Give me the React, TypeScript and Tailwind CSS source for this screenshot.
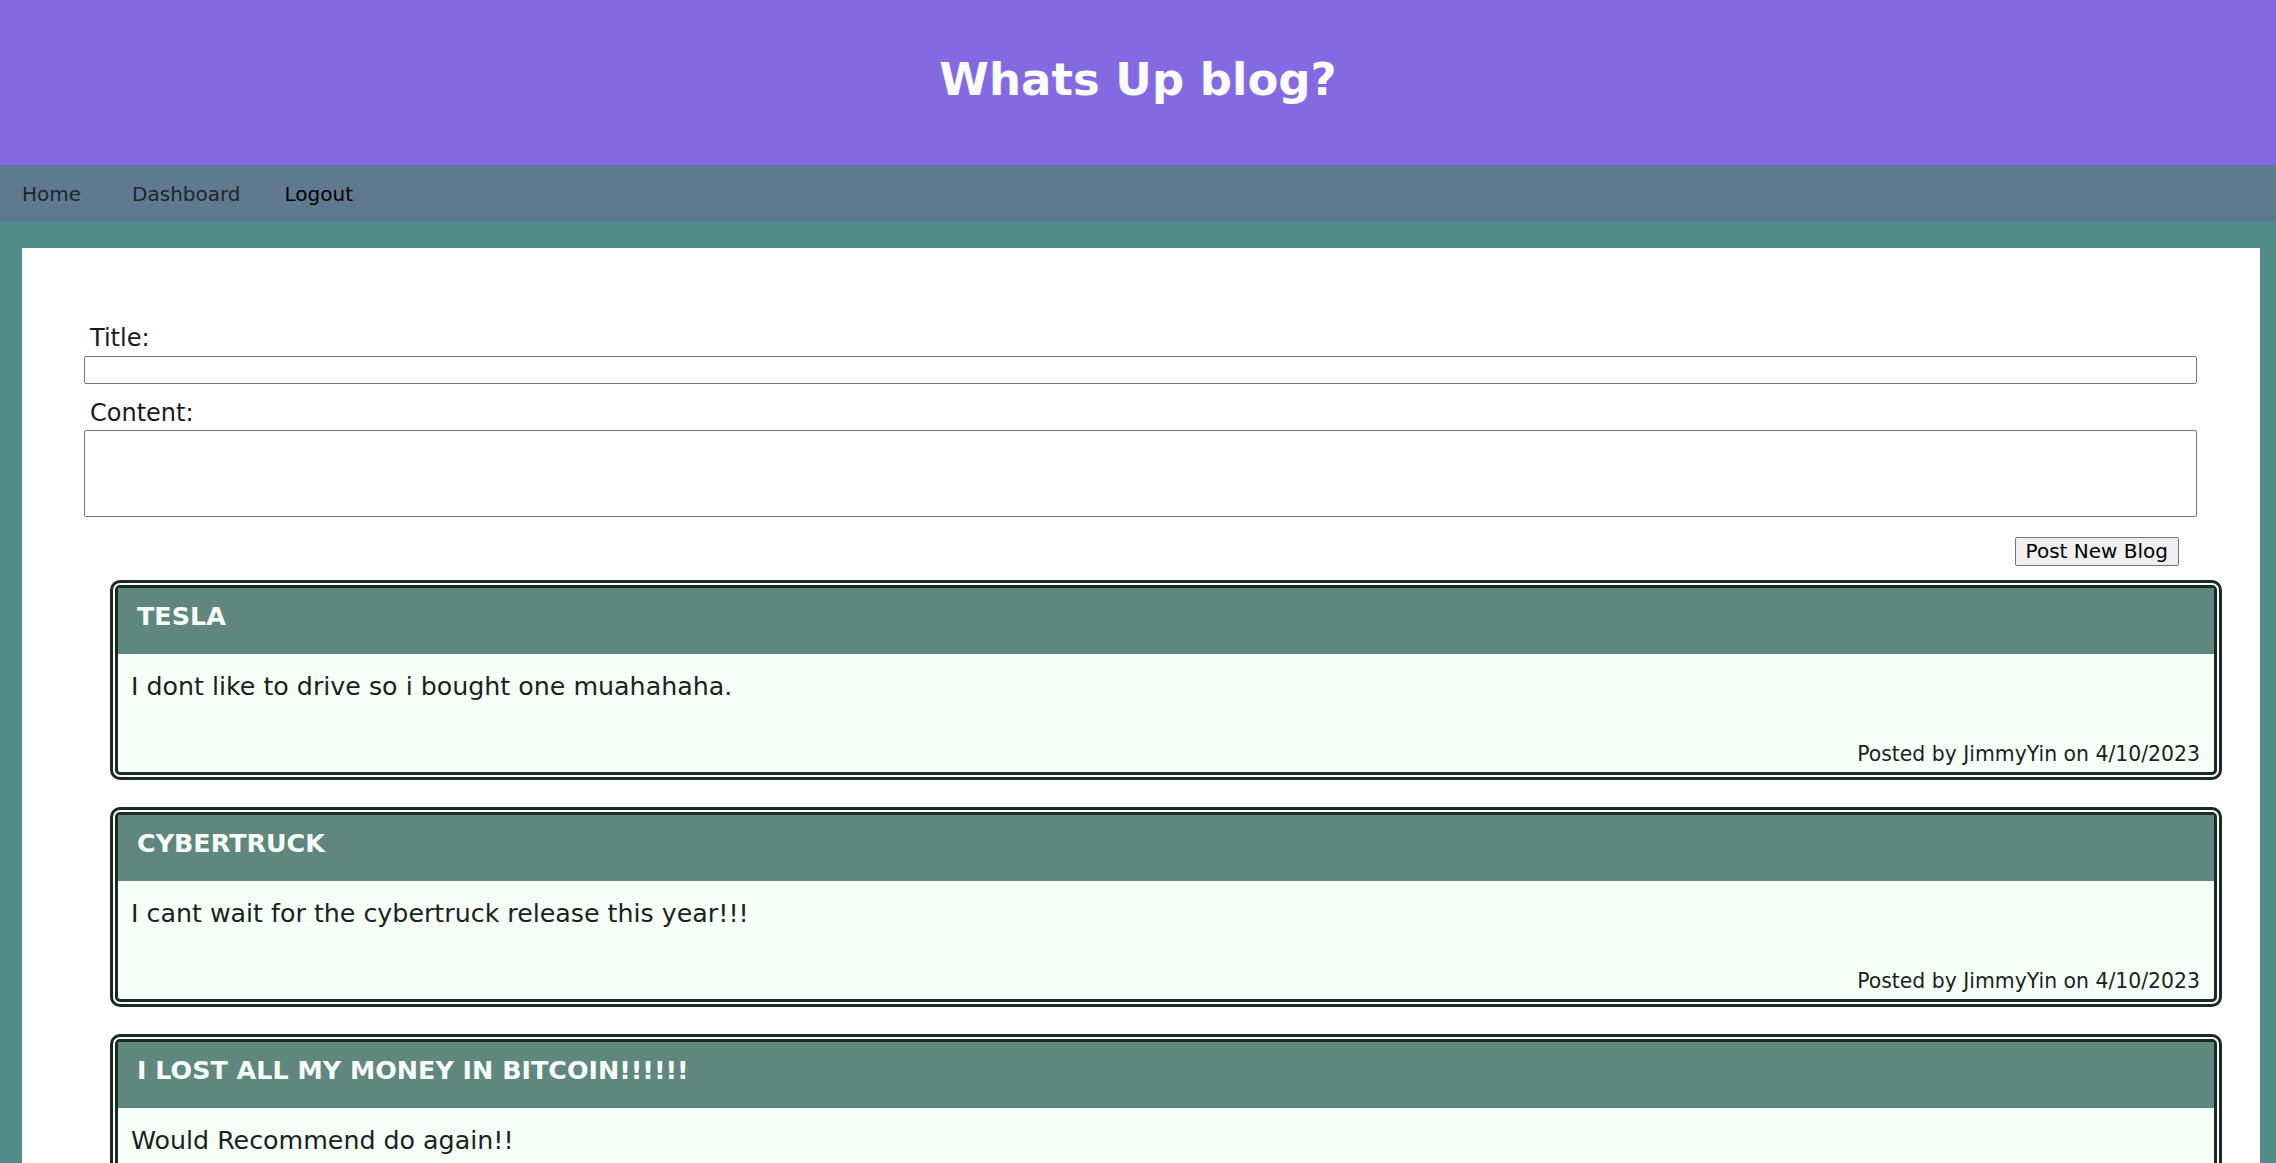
import React from 'react';

type Post = {
  id: number;
  title: string;
  body: string;
  author: string;
  date: string;
};

const posts: Post[] = [
  { id: 1, title: 'TESLA', body: 'I dont like to drive so i bought one muahahaha.', author: 'JimmyYin', date: '4/10/2023' },
  { id: 2, title: 'CYBERTRUCK', body: 'I cant wait for the cybertruck release this year!!!', author: 'JimmyYin', date: '4/10/2023' },
  { id: 3, title: 'I LOST ALL MY MONEY IN BITCOIN!!!!!!', body: 'Would Recommend do again!!', author: 'JimmyYin', date: '4/10/2023' },
];

const font = "font-['DejaVu_Sans','Verdana',sans-serif]";

const PostCard: React.FC<{ post: Post }> = ({ post }) => (
  <div className="mb-[27px] rounded-[10px] border-[8px] border-double border-[#1a2b24] bg-[#f7fff9] overflow-hidden">
    <div className="h-[66px] bg-[#5f877e] pl-[19px] pt-[10px]">
      <h2 className="text-[25.4px] leading-[36px] font-bold text-[#f7fffb]">{post.title}</h2>
    </div>
    <div className="pl-[13px] pr-[14px] pt-[15px] pb-[3px] text-[#1a221e]">
      <p className="text-[25.3px] leading-[36px]">{post.body}</p>
      <p className="mt-[34px] text-right text-[20.4px] leading-[30px]">
        Posted by {post.author} on {post.date}
      </p>
    </div>
  </div>
);

const App: React.FC = () => {
  return (
    <div className={`min-h-screen bg-[#528c87] ${font} overflow-hidden`}>
      {/* Header */}
      <header className="h-[165px] bg-[#836ae2] pt-[57px] text-center">
        <h1 className="text-[45px] leading-[45px] font-bold text-[#f8fcff]">Whats Up blog?</h1>
      </header>

      {/* Nav */}
      <nav className="flex h-[57px] bg-[#5f7a8f] pt-[2px] text-[20px] leading-[55px]">
        <a href="#" className="ml-[22px] text-[#1d2530]">Home</a>
        <a href="#" className="ml-[51px] text-[#1d2530]">Dashboard</a>
        <a href="#" className="ml-[44px] text-black">Logout</a>
      </nav>

      {/* Main */}
      <main className="ml-[22px] mr-[16px] mt-[26px] bg-white pb-[40px]">
        <form className="ml-[62px] mr-[63px] pt-[76px] flex flex-col">
          <label className="ml-[6px] text-[24px] leading-[28px] text-[#1a1a1a]">Title:</label>
          <input
            type="text"
            className="mt-[4px] h-[28px] rounded-[2px] border border-[#767676] bg-white"
          />
          <label className="ml-[6px] mt-[15px] text-[24px] leading-[28px] text-[#1a1a1a]">Content:</label>
          <textarea className="mt-[3px] h-[87px] resize-none rounded-[2px] border border-[#767676] bg-white" />
          <div className="mt-[20px] flex justify-end pr-[18px]">
            <button
              type="button"
              className="rounded-[2px] border border-[#767676] bg-[#efefef] px-[10px] py-[2px] text-[20px] leading-[23px] text-black"
            >
              Post New Blog
            </button>
          </div>
        </form>

        <section className="ml-[88px] mr-[38px] mt-[14px]">
          {posts.map((post) => (
            <PostCard key={post.id} post={post} />
          ))}
        </section>
      </main>
    </div>
  );
};

export default App;
